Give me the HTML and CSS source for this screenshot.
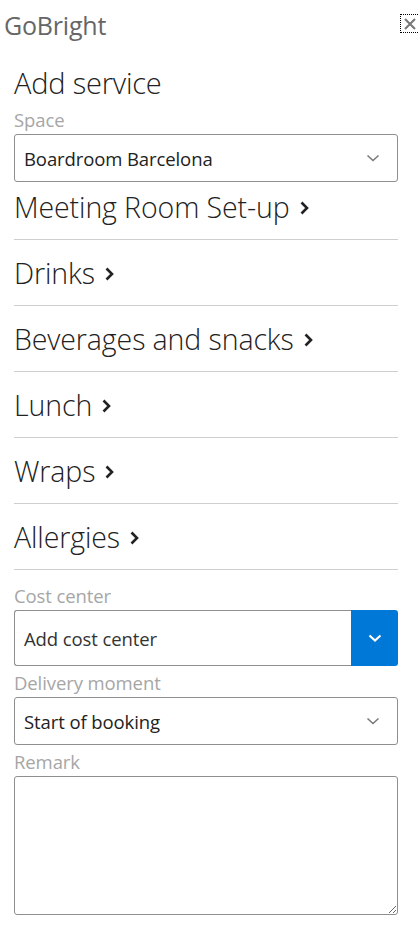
FILE: index.html
```html
<!DOCTYPE html>
<html>
<head>
<meta charset="utf-8">
<link rel="stylesheet" href="styles.css">
</head>
<body>
<header class="top">
  <div class="brand">GoBright</div>
  <button class="close" aria-label="Close">
    <svg width="12" height="12" viewBox="0 0 12 12"><path d="M1 1 L11 11 M11 1 L1 11" stroke="#777" stroke-width="2" fill="none"/></svg>
  </button>
</header>
<main class="panel">
  <h1 class="title">Add service</h1>
  <div class="label">Space</div>
  <div class="select">
    <span class="select-text">Boardroom Barcelona</span>
    <svg class="chev" width="14" height="8" viewBox="0 0 14 8"><path d="M1.5 1.5 L7 6.5 L12.5 1.5" stroke="#7a7a7a" stroke-width="1.6" fill="none"/></svg>
  </div>
  <ul class="cats">
    <li class="cat">Meeting Room Set-up <svg class="arrow" width="9" height="14" viewBox="0 0 9 14"><path d="M1.5 1.5 L7 7 L1.5 12.5" stroke="#222" stroke-width="2.6" fill="none"/></svg></li>
    <li class="cat">Drinks <svg class="arrow" width="9" height="14" viewBox="0 0 9 14"><path d="M1.5 1.5 L7 7 L1.5 12.5" stroke="#222" stroke-width="2.6" fill="none"/></svg></li>
    <li class="cat">Beverages and snacks <svg class="arrow" width="9" height="14" viewBox="0 0 9 14"><path d="M1.5 1.5 L7 7 L1.5 12.5" stroke="#222" stroke-width="2.6" fill="none"/></svg></li>
    <li class="cat">Lunch <svg class="arrow" width="9" height="14" viewBox="0 0 9 14"><path d="M1.5 1.5 L7 7 L1.5 12.5" stroke="#222" stroke-width="2.6" fill="none"/></svg></li>
    <li class="cat">Wraps <svg class="arrow" width="9" height="14" viewBox="0 0 9 14"><path d="M1.5 1.5 L7 7 L1.5 12.5" stroke="#222" stroke-width="2.6" fill="none"/></svg></li>
    <li class="cat">Allergies <svg class="arrow" width="9" height="14" viewBox="0 0 9 14"><path d="M1.5 1.5 L7 7 L1.5 12.5" stroke="#222" stroke-width="2.6" fill="none"/></svg></li>
  </ul>
  <div class="label label-first">Cost center</div>
  <div class="combo">
    <span class="combo-text">Add cost center</span>
    <span class="combo-btn"><svg width="14" height="8" viewBox="0 0 14 8"><path d="M1.5 1.5 L7 6.5 L12.5 1.5" stroke="#fff" stroke-width="2.2" fill="none"/></svg></span>
  </div>
  <div class="label">Delivery moment</div>
  <div class="select">
    <span class="select-text">Start of booking</span>
    <svg class="chev" width="14" height="8" viewBox="0 0 14 8"><path d="M1.5 1.5 L7 6.5 L12.5 1.5" stroke="#7a7a7a" stroke-width="1.6" fill="none"/></svg>
  </div>
  <div class="label">Remark</div>
  <textarea class="remark"></textarea>
</main>
</body>
</html>
```
FILE: styles.css
```css
html, body {
  margin: 0;
  padding: 0;
  background: #fff;
  overflow-x: hidden;
}
body {
  font-family: "Open Sans", "Noto Sans", sans-serif;
  color: #222;
  width: 418px;
}
.top {
  display: flex;
  justify-content: space-between;
  align-items: flex-start;
  padding: 9px 0 0 4px;
  height: 32px;
}
.brand {
  font-size: 25px;
  line-height: 32px;
  color: #666;
  font-weight: 400;
  letter-spacing: -0.2px;
}
.close {
  margin-top: 5px;
  margin-right: -4px;
  width: 22px;
  height: 19px;
  padding: 0;
  border: 1px dotted #000;
  background: #fff;
  display: flex;
  align-items: center;
  justify-content: flex-start;
  padding-left: 3px;
}
.panel {
  padding: 0 20px 0 14px;
}
.title {
  margin: 24px 0 0;
  font-size: 29px;
  line-height: 36px;
  font-weight: 300;
  color: #222;
  letter-spacing: -0.2px;
}
.label {
  margin: 5px 0 2px;
  font-size: 18.5px;
  line-height: 24px;
  color: #a6a6a6;
  letter-spacing: -0.1px;
}
.title + .label {
  margin-top: 7px;
}
.label-first {
  margin-top: 14px;
}
.select {
  height: 46px;
  border: 1px solid #8f8f8f;
  border-radius: 3px;
  display: flex;
  align-items: center;
  justify-content: space-between;
  padding: 0 17px 0 9px;
}
.select-text {
  font-size: 18.5px;
  color: #222;
  letter-spacing: -0.1px;
}
.chev {
  display: block;
}
.cats {
  list-style: none;
  margin: 0;
  padding: 0;
}
.cat {
  display: flex;
  align-items: center;
  gap: 10px;
  font-size: 28.5px;
  line-height: 41px;
  font-weight: 300;
  color: #222;
  padding: 13px 0 11px;
  border-bottom: 1px solid #cfcfcf;
  letter-spacing: -0.1px;
}
.cat:first-child {
  padding-top: 5px;
}
.arrow {
  display: block;
  margin-top: 1px;
}
.combo {
  height: 56px;
  display: flex;
}
.combo-text {
  flex: 1;
  border: 1px solid #8f8f8f;
  border-right: none;
  border-radius: 3px 0 0 3px;
  display: flex;
  align-items: center;
  padding-left: 9px;
  font-size: 18.5px;
  color: #333;
  letter-spacing: -0.1px;
}
.combo-btn {
  width: 47px;
  background: #0078d7;
  border-radius: 0 3px 3px 0;
  display: flex;
  align-items: center;
  justify-content: center;
}
.remark {
  display: block;
  box-sizing: border-box;
  width: 100%;
  height: 139px;
  margin: 0;
  border: 1px solid #8f8f8f;
  border-radius: 3px;
  font-family: inherit;
}
```
